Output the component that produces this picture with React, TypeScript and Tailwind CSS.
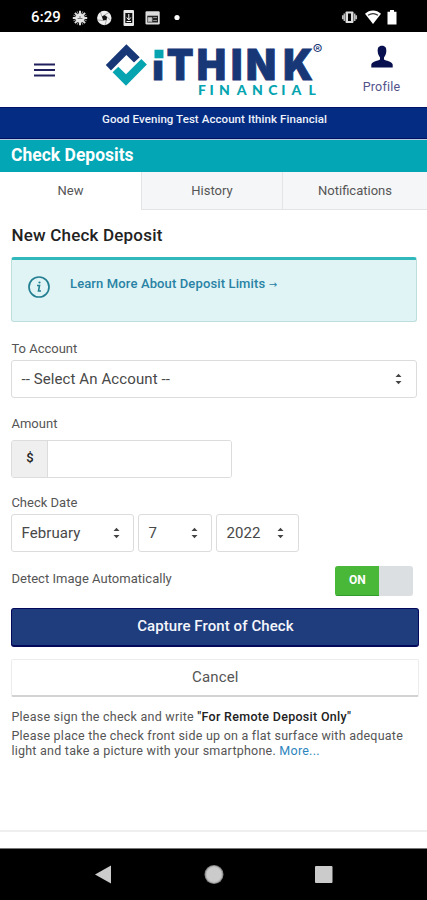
import React from 'react';

const tabs = ['New', 'History', 'Notifications'];

interface SelectBoxProps {
  value: string;
  className: string;
}

const SelectBox: React.FC<SelectBoxProps> = ({ value, className }) => (
  <button
    className={`flex h-[38px] items-center justify-between rounded-[3px] border border-[#dcdcdc] bg-white pl-[9px] text-[15px] tracking-[0.1px] text-[#484848] ${className}`}
  >
    <span>{value}</span>
    <svg width="7" height="12" viewBox="0 0 7 12" fill="#444">
      <path d="M0.5 4 3.5 0.7 6.5 4ZM0.5 8 3.5 11.3 6.5 8Z" />
    </svg>
  </button>
);

const StatusBar: React.FC = () => (
  <div className="flex h-8 items-center justify-between bg-black pr-[29px] pl-[31px] text-white">
    <div className="flex items-center pt-[3px]">
      <span className="w-[41px] text-[15px] leading-none font-medium tracking-[0.1px]">6:29</span>
      <svg width="140" height="18" viewBox="72 9 140 18">
        {/* sun */}
        <path
          d="M80 10.8V25.200M72.800 18H87.200M74.900 12.900 85.100 23.100M85.100 12.900 74.900 23.100"
          stroke="#ddd"
          strokeWidth="2"
        />
        <path
          d="M77.200 11.400 82.800 24.600M82.800 11.400 77.200 24.600M73.400 15.200 86.600 20.800M86.600 15.200 73.400 20.800"
          stroke="#999"
          strokeWidth="1"
        />
        <circle cx="80" cy="18" r="4.600" fill="#e5e5e5" />
        <path d="M77.500 18.500H82.500M80 16V18" stroke="#777" strokeWidth="1" />
        {/* aperture */}
        <circle cx="104.300" cy="18" r="7.200" fill="#f0f0f0" />
        <path d="M101.800 16.500 104.500 15 107.200 17 106.500 20 103.200 20.500Z" fill="#111" />
        <path d="M101.800 16.500 100.500 12M104.500 15 109 12.500M107.200 17 110.500 20M106.500 20 105 25M103.200 20.500 98 20" stroke="#888" strokeWidth=".7" />
        {/* phone download */}
        <rect x="123.500" y="10" width="10.500" height="16" rx="1" fill="#e8e8e8" />
        <rect x="125.300" y="13" width="7" height="10" fill="#111" />
        <path d="M128.800 14V19M126.800 17.500 128.800 20 130.800 17.500M126.500 21.500H131" stroke="#fff" strokeWidth="1" fill="none" />
        {/* news card */}
        <rect x="145.500" y="11.300" width="14.200" height="13.200" rx="1.200" fill="#ddd" />
        <path d="M147.300 15.700H158V22.500H147.300Z" fill="#222" />
        <path d="M148 17.500H152V21.500H148ZM153.200 17.500H157M153.200 20.500H157" fill="#ccc" stroke="#aaa" strokeWidth=".8" />
        <circle cx="177" cy="17.500" r="2.600" fill="#fff" />
      </svg>
    </div>
    <svg width="57" height="18" viewBox="342 8 57 18" className="mt-[1px]">
      <rect x="346.500" y="11.500" width="8" height="11.500" rx="1" fill="#ddd" />
      <rect x="349" y="13.500" width="3" height="7.500" fill="#000" />
      <path d="M345.300 13.500V21M343.700 15.300V19.200M355.700 13.500V21M357.300 15.300V19.200" stroke="#bbb" strokeWidth="1.500" />
      <path d="M366 13.800C370.500 9.300 377.500 9.300 382 13.800L374 24Z" fill="#fff" />
      <path d="M369 15.300C372 13.300 376 13.300 379 15.300" stroke="#333" strokeWidth="1.100" fill="none" />
      <path d="M388.500 11.700H391V10H395V11.700H397.500V24.500H388.500Z" fill="#fff" />
    </svg>
  </div>
);

const Logo: React.FC = () => (
  <svg width="222" height="60" viewBox="104 40 222 60" role="img" aria-label="iThink Financial">
    <path d="M105.800 65 126.400 44.200 139.700 57.200 134 62.600 126.400 55 111 70.500Z" fill="#183777" />
    <path d="M112.600 72.300 118.300 66.700 126 74.300 141.300 59 146.900 64.500 126 85.700Z" fill="#05a4b0" />
    <g fill="#183777" fontFamily="Inter">
      <text
        transform="scale(0.92 1)"
        x="165.500 181.400 213.800 251.200 267.500 307.800"
        y="80.200"
        fontSize="42.500"
        fontWeight="900"
        stroke="#183777"
        strokeWidth=".9"
      >
        iTHINK
      </text>
      <text x="312.800" y="54.700" fontSize="14.500" fontWeight="400">®</text>
    </g>
    {/* the dot of the i is a teal square */}
    <path d="M152 44H165.700V60.500H152Z" fill="#fff" />
    <path d="M154.500 49.700H163.500V58.300H154.500Z" fill="#05a4b0" />
    <text
      x="198 209.500 219 236.700 252 268.200 281.300 291.500 308.500"
      y="95.300"
      fill="#05a4b0"
      fontFamily="Lato"
      fontSize="14"
      fontWeight="900"
    >
      FINANCIAL
    </text>
  </svg>
);

const Header: React.FC = () => (
  <header className="flex h-[75px] bg-white">
    <button className="ml-[34px] flex h-[76px] w-[70px] items-center" aria-label="Menu">
      <svg width="21" height="14" viewBox="0 0 21 14" stroke="#20205c" strokeWidth="1.800">
        <path d="M0 1.500H21M0 7H21M0 12.500H21" />
      </svg>
    </button>
    <div className="pt-2">
      <Logo />
    </div>
    <button className="ml-[29px] flex w-[53px] flex-col items-center pt-[13px] text-[12.5px] tracking-[0.2px] text-[#53538b]">
      <svg width="22" height="23" viewBox="0 0 22 23" fill="#08104f">
        <path d="M11 .8C7.500.8 6.500 3 6.700 6.500C6.900 9.500 8 11 9 12.500V14.500C7 16 1.500 16 .3 19.500V22.500H21.700V19.500C20.500 16 15 16 13 14.500V12.500C14 11 15.100 9.500 15.300 6.500C15.500 3 14.500.8 11 .8Z" />
      </svg>
      <span className="mt-[10px] leading-[18px]">Profile</span>
    </button>
  </header>
);

export default function App() {
  return (
    <div className="flex h-[900px] w-[427px] flex-col overflow-hidden bg-white font-[Roboto,sans-serif] text-[#555]">
      <StatusBar />
      <Header />

      <div className="h-8 border-t border-b border-t-[#001568] border-b-[#00115f] bg-[#032c82] pt-[3px] pl-[2px] text-center text-[11.5px] leading-4 font-medium tracking-[0.07px] text-[#eef2fb]">
        Good Evening Test Account Ithink Financial
      </div>
      <h1 className="h-[33px] border-t border-[#b5cbe0] bg-[#02a6b5] pl-[11px] text-[17.5px] leading-[31px] font-bold text-white">
        Check Deposits
      </h1>

      <nav className="grid h-[38px] grid-cols-[141px_141px_145px] text-[13px]">
        {tabs.map((tab, i) => (
          <button
            key={tab}
            className={
              i === 0
                ? 'bg-white pb-[1px]'
                : 'border-b border-l border-[#e3e4e6] bg-[#f5f6f8]'
            }
          >
            {tab}
          </button>
        ))}
      </nav>

      <main className="flex h-[622px] shrink-0 flex-col border-b-2 border-[#efefef] pl-[11.4px]">
        <h2 className="mt-[13px] h-6 text-[17px] leading-6 font-medium tracking-[0.2px] text-[#222]">
          New Check Deposit
        </h2>
        <div className="mt-[10px] flex h-[65px] w-[406px] rounded-[3px] border border-t-[3px] border-[#bcdedc] border-t-[#31b8ba] bg-[#e0f4f5] pl-[15.6px] text-[13px] font-medium text-[#2882a4]">
          <svg className="mt-4" width="22" height="22" viewBox="0 0 22 22" fill="none" stroke="#237f91">
            <circle cx="11" cy="11" r="10" strokeWidth="1.700" />
            <path d="M9 9.500H11.500L10.500 15H13" strokeWidth="1.600" />
            <circle cx="11.500" cy="6.500" r="1.100" fill="#237f91" stroke="none" />
          </svg>
          <a className="mt-[14px] ml-5 tracking-[0.13px]">
            Learn More About Deposit Limits{' '}
            <span className="font-['DejaVu_Sans'] text-[10px] font-normal">→</span>
          </a>
        </div>

        <label className="mt-[17px] h-[21px] text-[13px] leading-5">To Account</label>
        <SelectBox value="-- Select An Account --" className="w-[406px] shrink-0 pr-[14px]" />

        <label className="mt-4 h-[26px] text-[13px] leading-5 tracking-[0.05px]">Amount</label>
        <div className="flex h-[38px] w-[221px] overflow-hidden rounded-[3px] border border-[#dcdcdc]">
          <span className="flex w-9 items-center justify-center border-r border-[#dcdcdc] bg-[#efefef] pb-[2px] text-[13px] font-medium text-[#222]">
            $
          </span>
          <input className="min-w-0 flex-1 bg-white" aria-label="Amount" />
        </div>

        <label className="mt-[15px] h-[21px] text-[13px] leading-5">Check Date</label>
        <div className="flex gap-1">
          <SelectBox value="February" className="w-[123px] pr-[13px]" />
          <SelectBox value="7" className="w-[74px] pr-[13px]" />
          <SelectBox value="2022" className="w-[83px] pr-[14px]" />
        </div>

        <div className="mt-[14px] flex h-[30px] w-[402px] justify-between">
          <span className="text-[13px] leading-[25px] tracking-[0.03px]">Detect Image Automatically</span>
          <button className="flex h-[30px] w-[78px] overflow-hidden rounded-[3px] bg-[#dbdfe2] text-[12px] font-bold text-white">
            <span className="flex h-full w-[44px] items-center justify-center border-b border-[#319b2b] bg-[#49b738] pb-[2px]">
              ON
            </span>
          </button>
        </div>

        <button className="mt-3 h-[39px] w-[408px] shrink-0 rounded-[3px] border border-b-2 border-[#04095c] bg-[#1f3d7c] pb-[1px] text-[15px] font-medium tracking-[0.08px] text-[#f5f6fc]">
          Capture Front of Check
        </button>
        <button className="mt-3 h-[38px] w-[408px] shrink-0 rounded-[2px] border border-b-2 border-[#ececec] border-b-[#d2d2d2] bg-white text-[15px] tracking-[0.15px]">
          Cancel
        </button>

        <div className="mt-[11.5px] text-[12.5px] leading-4 tracking-[0.24px]">
          <p>
            Please sign the check and write{' '}
            <b className="font-medium tracking-[0.3px] text-[#222]">"For Remote Deposit Only"</b>
          </p>
          <p className="mt-[3px] w-[410px] leading-[15px]">
            Please place the check front side up on a flat surface with adequate
            <br />
            light and take a picture with your smartphone. <a className="text-[#2c86bd]">More...</a>
          </p>
        </div>
      </main>

      <div className="h-[17px] shrink-0 border-b border-[#777]" />
      <footer className="flex h-[51px] shrink-0 justify-center bg-black">
        <svg width="238" height="51" viewBox="95 849 238 51" fill="#cbcbcb">
          <path d="M95 874.500 111 865.500V883.500Z" />
          <circle cx="214" cy="874.500" r="9.500" fill="#888" />
          <circle cx="214" cy="874.500" r="8" stroke="#bbb" />
          <rect x="315" y="866" width="17.500" height="17" rx="1" />
        </svg>
      </footer>
    </div>
  );
}
